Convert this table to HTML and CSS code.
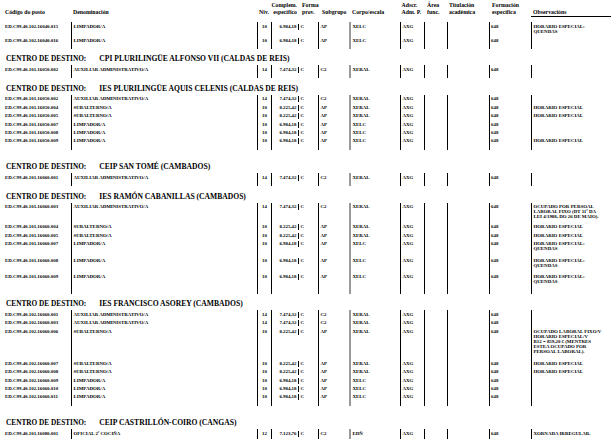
FILE: index.html
```html
<!DOCTYPE html>
<html lang="gl">
<head>
<meta charset="utf-8">
<title>Relación de postos</title>
<link rel="stylesheet" href="styles.css">
</head>
<body>
<div class="page">
  <div class="thead">
    <div class="h h-code"><br>Código do posto</div>
    <div class="h h-den"><br>Denominación</div>
    <div class="h h-niv"><br>Niv.</div>
    <div class="h h-comp">Complem.<br>específico</div>
    <div class="h h-forma">Forma<br>prov.</div>
    <div class="h h-sub"><br>Subgrupo</div>
    <div class="h h-corpo"><br>Corpo/escala</div>
    <div class="h h-ads">Adscr.<br>Adm. P.</div>
    <div class="h h-area">Área<br>func.</div>
    <div class="h h-tit">Titulación<br>académica</div>
    <div class="h h-form">Formación<br>específica</div>
    <div class="h h-obs"><br><span class="uline">Observacións</span></div>
  </div>

  <div class="block">
    <div class="row l2a">
      <div class="c c-code">ED.C99.40.102.16040.015</div><div class="c c-den">LIMPADOR/A</div><div class="c c-niv">10</div><div class="c c-comp">6.984,18</div><div class="c c-forma"><span>C</span></div><div class="c c-sub">AP</div><div class="c c-corpo">XELC</div><div class="c c-ads">AXG</div><div class="c c-area"></div><div class="c c-tit"></div><div class="c c-form">648</div><div class="c c-obs">HORARIO ESPECIAL:<br>QUENDAS</div>
    </div>
    <div class="row">
      <div class="c c-code">ED.C99.40.102.16040.016</div><div class="c c-den">LIMPADOR/A</div><div class="c c-niv">10</div><div class="c c-comp">6.984,18</div><div class="c c-forma"><span>C</span></div><div class="c c-sub">AP</div><div class="c c-corpo">XELC</div><div class="c c-ads">AXG</div><div class="c c-area"></div><div class="c c-tit"></div><div class="c c-form">648</div><div class="c c-obs"></div>
    </div>
    <div class="row tail"><div class="c c-code"></div><div class="c c-den"></div><div class="c c-niv"></div><div class="c c-comp"></div><div class="c c-forma"></div><div class="c c-sub"></div><div class="c c-corpo"></div><div class="c c-ads"></div><div class="c c-area"></div><div class="c c-tit"></div><div class="c c-form"></div><div class="c c-obs"></div></div>
  </div>

  <section class="sect">
    <h2 class="stitle"><span class="lab">CENTRO DE DESTINO:</span><span class="nm">CPI PLURILINGÜE ALFONSO VII (CALDAS DE REIS)</span></h2>
    <div class="block">
      <div class="row">
        <div class="c c-code">ED.C99.40.101.16050.002</div><div class="c c-den">AUXILIAR ADMINISTRATIVO/A</div><div class="c c-niv">14</div><div class="c c-comp">7.474,32</div><div class="c c-forma"><span>C</span></div><div class="c c-sub">C2</div><div class="c c-corpo">XERAL</div><div class="c c-ads">AXG</div><div class="c c-area"></div><div class="c c-tit"></div><div class="c c-form">648</div><div class="c c-obs"></div>
      </div>
      <div class="row tail"><div class="c c-code"></div><div class="c c-den"></div><div class="c c-niv"></div><div class="c c-comp"></div><div class="c c-forma"></div><div class="c c-sub"></div><div class="c c-corpo"></div><div class="c c-ads"></div><div class="c c-area"></div><div class="c c-tit"></div><div class="c c-form"></div><div class="c c-obs"></div></div>
    </div>
  </section>

  <section class="sect">
    <h2 class="stitle"><span class="lab">CENTRO DE DESTINO:</span><span class="nm">IES PLURILINGÜE AQUIS CELENIS (CALDAS DE REIS)</span></h2>
    <div class="block">
      <div class="row">
        <div class="c c-code">ED.C99.40.101.16050.002</div><div class="c c-den">AUXILIAR ADMINISTRATIVO/A</div><div class="c c-niv">14</div><div class="c c-comp">7.474,32</div><div class="c c-forma"><span>C</span></div><div class="c c-sub">C2</div><div class="c c-corpo">XERAL</div><div class="c c-ads">AXG</div><div class="c c-area"></div><div class="c c-tit"></div><div class="c c-form">648</div><div class="c c-obs"></div>
      </div>
      <div class="row">
        <div class="c c-code">ED.C99.40.101.16050.004</div><div class="c c-den">SUBALTERNO/A</div><div class="c c-niv">10</div><div class="c c-comp">8.225,42</div><div class="c c-forma"><span>C</span></div><div class="c c-sub">AP</div><div class="c c-corpo">XERAL</div><div class="c c-ads">AXG</div><div class="c c-area"></div><div class="c c-tit"></div><div class="c c-form">648</div><div class="c c-obs">HORARIO ESPECIAL</div>
      </div>
      <div class="row">
        <div class="c c-code">ED.C99.40.101.16050.005</div><div class="c c-den">SUBALTERNO/A</div><div class="c c-niv">10</div><div class="c c-comp">8.225,42</div><div class="c c-forma"><span>C</span></div><div class="c c-sub">AP</div><div class="c c-corpo">XERAL</div><div class="c c-ads">AXG</div><div class="c c-area"></div><div class="c c-tit"></div><div class="c c-form">648</div><div class="c c-obs">HORARIO ESPECIAL</div>
      </div>
      <div class="row">
        <div class="c c-code">ED.C99.40.101.16050.007</div><div class="c c-den">LIMPADOR/A</div><div class="c c-niv">10</div><div class="c c-comp">6.984,18</div><div class="c c-forma"><span>C</span></div><div class="c c-sub">AP</div><div class="c c-corpo">XELC</div><div class="c c-ads">AXG</div><div class="c c-area"></div><div class="c c-tit"></div><div class="c c-form">648</div><div class="c c-obs"></div>
      </div>
      <div class="row">
        <div class="c c-code">ED.C99.40.101.16050.008</div><div class="c c-den">LIMPADOR/A</div><div class="c c-niv">10</div><div class="c c-comp">6.984,18</div><div class="c c-forma"><span>C</span></div><div class="c c-sub">AP</div><div class="c c-corpo">XELC</div><div class="c c-ads">AXG</div><div class="c c-area"></div><div class="c c-tit"></div><div class="c c-form">648</div><div class="c c-obs"></div>
      </div>
      <div class="row">
        <div class="c c-code">ED.C99.40.101.16050.009</div><div class="c c-den">LIMPADOR/A</div><div class="c c-niv">10</div><div class="c c-comp">6.984,18</div><div class="c c-forma"><span>C</span></div><div class="c c-sub">AP</div><div class="c c-corpo">XELC</div><div class="c c-ads">AXG</div><div class="c c-area"></div><div class="c c-tit"></div><div class="c c-form">648</div><div class="c c-obs">HORARIO ESPECIAL</div>
      </div>
      <div class="row tail"><div class="c c-code"></div><div class="c c-den"></div><div class="c c-niv"></div><div class="c c-comp"></div><div class="c c-forma"></div><div class="c c-sub"></div><div class="c c-corpo"></div><div class="c c-ads"></div><div class="c c-area"></div><div class="c c-tit"></div><div class="c c-form"></div><div class="c c-obs"></div></div>
    </div>
  </section>

  <section class="sect far">
    <h2 class="stitle"><span class="lab">CENTRO DE DESTINO:</span><span class="nm">CEIP SAN TOMÉ (CAMBADOS)</span></h2>
    <div class="block">
      <div class="row">
        <div class="c c-code">ED.C99.40.101.16060.001</div><div class="c c-den">AUXILIAR ADMINISTRATIVO/A</div><div class="c c-niv">14</div><div class="c c-comp">7.474,32</div><div class="c c-forma"><span>C</span></div><div class="c c-sub">C2</div><div class="c c-corpo">XERAL</div><div class="c c-ads">AXG</div><div class="c c-area"></div><div class="c c-tit"></div><div class="c c-form">648</div><div class="c c-obs"></div>
      </div>
      <div class="row tail"><div class="c c-code"></div><div class="c c-den"></div><div class="c c-niv"></div><div class="c c-comp"></div><div class="c c-forma"></div><div class="c c-sub"></div><div class="c c-corpo"></div><div class="c c-ads"></div><div class="c c-area"></div><div class="c c-tit"></div><div class="c c-form"></div><div class="c c-obs"></div></div>
    </div>
  </section>

  <section class="sect">
    <h2 class="stitle"><span class="lab">CENTRO DE DESTINO:</span><span class="nm">IES RAMÓN CABANILLAS (CAMBADOS)</span></h2>
    <div class="block">
      <div class="row l3">
        <div class="c c-code">ED.C99.40.101.16060.003</div><div class="c c-den">AUXILIAR ADMINISTRATIVO/A</div><div class="c c-niv">14</div><div class="c c-comp">7.474,32</div><div class="c c-forma"><span>C</span></div><div class="c c-sub">C2</div><div class="c c-corpo">XERAL</div><div class="c c-ads">AXG</div><div class="c c-area"></div><div class="c c-tit"></div><div class="c c-form">648</div><div class="c c-obs">OCUPADO POR PERSOAL<br>LABORAL FIXO (DT 11ª DA<br>LEI 4/1988, DO 26 DE MAIO).</div>
      </div>
      <div class="row">
        <div class="c c-code">ED.C99.40.101.16060.004</div><div class="c c-den">SUBALTERNO/A</div><div class="c c-niv">10</div><div class="c c-comp">8.225,42</div><div class="c c-forma"><span>C</span></div><div class="c c-sub">AP</div><div class="c c-corpo">XERAL</div><div class="c c-ads">AXG</div><div class="c c-area"></div><div class="c c-tit"></div><div class="c c-form">648</div><div class="c c-obs">HORARIO ESPECIAL</div>
      </div>
      <div class="row">
        <div class="c c-code">ED.C99.40.101.16060.005</div><div class="c c-den">SUBALTERNO/A</div><div class="c c-niv">10</div><div class="c c-comp">8.225,42</div><div class="c c-forma"><span>C</span></div><div class="c c-sub">AP</div><div class="c c-corpo">XERAL</div><div class="c c-ads">AXG</div><div class="c c-area"></div><div class="c c-tit"></div><div class="c c-form">648</div><div class="c c-obs">HORARIO ESPECIAL</div>
      </div>
      <div class="row l2b">
        <div class="c c-code">ED.C99.40.101.16060.007</div><div class="c c-den">LIMPADOR/A</div><div class="c c-niv">10</div><div class="c c-comp">6.984,18</div><div class="c c-forma"><span>C</span></div><div class="c c-sub">AP</div><div class="c c-corpo">XELC</div><div class="c c-ads">AXG</div><div class="c c-area"></div><div class="c c-tit"></div><div class="c c-form">648</div><div class="c c-obs">HORARIO ESPECIAL:<br>QUENDAS</div>
      </div>
      <div class="row l2b">
        <div class="c c-code">ED.C99.40.101.16060.008</div><div class="c c-den">LIMPADOR/A</div><div class="c c-niv">10</div><div class="c c-comp">6.984,18</div><div class="c c-forma"><span>C</span></div><div class="c c-sub">AP</div><div class="c c-corpo">XELC</div><div class="c c-ads">AXG</div><div class="c c-area"></div><div class="c c-tit"></div><div class="c c-form">648</div><div class="c c-obs">HORARIO ESPECIAL:<br>QUENDAS</div>
      </div>
      <div class="row l2b">
        <div class="c c-code">ED.C99.40.101.16060.009</div><div class="c c-den">LIMPADOR/A</div><div class="c c-niv">10</div><div class="c c-comp">6.984,18</div><div class="c c-forma"><span>C</span></div><div class="c c-sub">AP</div><div class="c c-corpo">XELC</div><div class="c c-ads">AXG</div><div class="c c-area"></div><div class="c c-tit"></div><div class="c c-form">648</div><div class="c c-obs">HORARIO ESPECIAL:<br>QUENDAS</div>
      </div>
      <div class="row tail"><div class="c c-code"></div><div class="c c-den"></div><div class="c c-niv"></div><div class="c c-comp"></div><div class="c c-forma"></div><div class="c c-sub"></div><div class="c c-corpo"></div><div class="c c-ads"></div><div class="c c-area"></div><div class="c c-tit"></div><div class="c c-form"></div><div class="c c-obs"></div></div>
    </div>
  </section>

  <section class="sect">
    <h2 class="stitle"><span class="lab">CENTRO DE DESTINO:</span><span class="nm">IES FRANCISCO ASOREY (CAMBADOS)</span></h2>
    <div class="block">
      <div class="row">
        <div class="c c-code">ED.C99.40.102.16060.001</div><div class="c c-den">AUXILIAR ADMINISTRATIVO/A</div><div class="c c-niv">14</div><div class="c c-comp">7.474,32</div><div class="c c-forma"><span>C</span></div><div class="c c-sub">C2</div><div class="c c-corpo">XERAL</div><div class="c c-ads">AXG</div><div class="c c-area"></div><div class="c c-tit"></div><div class="c c-form">648</div><div class="c c-obs"></div>
      </div>
      <div class="row">
        <div class="c c-code">ED.C99.40.102.16060.003</div><div class="c c-den">AUXILIAR ADMINISTRATIVO/A</div><div class="c c-niv">14</div><div class="c c-comp">7.474,32</div><div class="c c-forma"><span>C</span></div><div class="c c-sub">C2</div><div class="c c-corpo">XERAL</div><div class="c c-ads">AXG</div><div class="c c-area"></div><div class="c c-tit"></div><div class="c c-form">648</div><div class="c c-obs"></div>
      </div>
      <div class="row l5">
        <div class="c c-code">ED.C99.40.102.16060.006</div><div class="c c-den">SUBALTERNO/A</div><div class="c c-niv">10</div><div class="c c-comp">8.225,42</div><div class="c c-forma"><span>C</span></div><div class="c c-sub">AP</div><div class="c c-corpo">XERAL</div><div class="c c-ads">AXG</div><div class="c c-area"></div><div class="c c-tit"></div><div class="c c-form">648</div><div class="c c-obs">OCUPADO LABORAL FIXO/V<br>HORARIO ESPECIAL/V<br>B12 = 859,20 € (MENTRES<br>ESTEA OCUPADO POR<br>PERSOAL LABORAL).</div>
      </div>
      <div class="row">
        <div class="c c-code">ED.C99.40.102.16060.007</div><div class="c c-den">SUBALTERNO/A</div><div class="c c-niv">10</div><div class="c c-comp">8.225,42</div><div class="c c-forma"><span>C</span></div><div class="c c-sub">AP</div><div class="c c-corpo">XERAL</div><div class="c c-ads">AXG</div><div class="c c-area"></div><div class="c c-tit"></div><div class="c c-form">648</div><div class="c c-obs">HORARIO ESPECIAL</div>
      </div>
      <div class="row">
        <div class="c c-code">ED.C99.40.102.16060.008</div><div class="c c-den">SUBALTERNO/A</div><div class="c c-niv">10</div><div class="c c-comp">8.225,42</div><div class="c c-forma"><span>C</span></div><div class="c c-sub">AP</div><div class="c c-corpo">XERAL</div><div class="c c-ads">AXG</div><div class="c c-area"></div><div class="c c-tit"></div><div class="c c-form">648</div><div class="c c-obs">HORARIO ESPECIAL</div>
      </div>
      <div class="row">
        <div class="c c-code">ED.C99.40.102.16060.009</div><div class="c c-den">LIMPADOR/A</div><div class="c c-niv">10</div><div class="c c-comp">6.984,18</div><div class="c c-forma"><span>C</span></div><div class="c c-sub">AP</div><div class="c c-corpo">XELC</div><div class="c c-ads">AXG</div><div class="c c-area"></div><div class="c c-tit"></div><div class="c c-form">648</div><div class="c c-obs"></div>
      </div>
      <div class="row">
        <div class="c c-code">ED.C99.40.102.16060.010</div><div class="c c-den">LIMPADOR/A</div><div class="c c-niv">10</div><div class="c c-comp">6.984,18</div><div class="c c-forma"><span>C</span></div><div class="c c-sub">AP</div><div class="c c-corpo">XELC</div><div class="c c-ads">AXG</div><div class="c c-area"></div><div class="c c-tit"></div><div class="c c-form">648</div><div class="c c-obs"></div>
      </div>
      <div class="row">
        <div class="c c-code">ED.C99.40.102.16060.011</div><div class="c c-den">LIMPADOR/A</div><div class="c c-niv">10</div><div class="c c-comp">6.984,18</div><div class="c c-forma"><span>C</span></div><div class="c c-sub">AP</div><div class="c c-corpo">XELC</div><div class="c c-ads">AXG</div><div class="c c-area"></div><div class="c c-tit"></div><div class="c c-form">648</div><div class="c c-obs"></div>
      </div>
      <div class="row tail"><div class="c c-code"></div><div class="c c-den"></div><div class="c c-niv"></div><div class="c c-comp"></div><div class="c c-forma"></div><div class="c c-sub"></div><div class="c c-corpo"></div><div class="c c-ads"></div><div class="c c-area"></div><div class="c c-tit"></div><div class="c c-form"></div><div class="c c-obs"></div></div>
    </div>
  </section>

  <section class="sect far">
    <h2 class="stitle"><span class="lab">CENTRO DE DESTINO:</span><span class="nm">CEIP CASTRILLÓN-COIRO (CANGAS)</span></h2>
    <div class="block">
      <div class="row">
        <div class="c c-code">ED.C99.40.101.16080.001</div><div class="c c-den">OFICIAL 2ª COCIÑA</div><div class="c c-niv">12</div><div class="c c-comp">7.123,76</div><div class="c c-forma"><span>C</span></div><div class="c c-sub">C2</div><div class="c c-corpo">EDÑ</div><div class="c c-ads">AXG</div><div class="c c-area"></div><div class="c c-tit"></div><div class="c c-form">648</div><div class="c c-obs">XORNADA IRREGULAR.</div>
      </div>
      <div class="row tail"><div class="c c-code"></div><div class="c c-den"></div><div class="c c-niv"></div><div class="c c-comp"></div><div class="c c-forma"></div><div class="c c-sub"></div><div class="c c-corpo"></div><div class="c c-ads"></div><div class="c c-area"></div><div class="c c-tit"></div><div class="c c-form"></div><div class="c c-obs"></div></div>
    </div>
  </section>
</div>
</body>
</html>
```

FILE: styles.css
```css
* {
  box-sizing: border-box;
  margin: 0;
  padding: 0;
}

html, body {
  background: #ffffff;
}

body {
  margin: 0;
  font-family: "Liberation Serif", "Times New Roman", serif;
  font-weight: bold;
  color: #000000;
}

.page {
  width: 616px;
  height: 439px;
  overflow: hidden;
}

/* shared column grid */
.thead,
.row {
  display: grid;
  grid-template-columns: 71px 186px 14px 27px 20px 31px 51px 24px 23px 42px 42px 85px;
}

/* ---------- table head ---------- */
.thead {
  height: 22px;
  padding-top: 1.5px;
  font-size: 5.8px;
  line-height: 7px;
  white-space: nowrap;
}

.h-code { padding-left: 5px; }
.h-den { padding-left: 2px; }
.h-niv { text-align: center; }
.h-comp { text-align: right; padding-right: 1px; }
.h-forma { padding-left: 4px; }
.h-sub { padding-left: 4px; }
.h-corpo { padding-left: 3px; }
.h-ads { padding-left: 1.5px; }
.h-area { padding-left: 3px; }
.h-tit { padding-left: 2px; }
.h-form { padding-left: 3px; }
.h-obs { padding-left: 0; }

.uline {
  display: block;
  width: 80px;
  padding-left: 2px;
  border-bottom: 1px solid #000;
  line-height: 7px;
}

/* ---------- body rows ---------- */
.row {
  height: 8.4px;
  font-size: 4.9px;
  line-height: 5px;
}

.row.l2a { height: 14px; }
.row.l2b { height: 16.5px; }
.row.l3 { height: 20px; }
.row.l5 { height: 32.2px; }
.row.tail { height: 4.6px; }

.c {
  padding-top: 1.5px;
  white-space: nowrap;
  overflow: hidden;
}

.tail .c { padding-top: 0; }

.c-code { padding-left: 5px; }
.c-den { border-left: 1px solid #000; padding-left: 1.5px; }
.c-niv { border-left: 1px solid #000; text-align: center; }
.c-comp { border-left: 1px solid #000; text-align: right; padding-right: 1.5px; }
.c-forma span {
  display: inline-block;
  border-left: 1px solid #000;
  padding-left: 1.5px;
  height: 6px;
  margin-top: -0.5px;
  line-height: 6px;
}
.c-sub { border-left: 1px solid #000; padding-left: 1.5px; }
.c-corpo { border-left: 2px solid #9a9a9a; padding-left: 1.5px; }
.c-ads { border-left: 1px solid #000; padding-left: 1.5px; }
.c-area { border-left: 1px solid #000; }
.c-tit { border-left: 1px solid #000; }
.c-form { border-left: 1px solid #000; padding-left: 1px; }
.c-obs { border-left: 1px solid #000; padding-left: 1.5px; }

/* ---------- section headings ---------- */
.sect {
  padding-top: 6.5px;
}

.sect.far {
  padding-top: 13.5px;
}

.stitle {
  height: 10px;
  padding-left: 6px;
  font-size: 7.3px;
  line-height: 8px;
  font-weight: bold;
  white-space: nowrap;
}

.stitle .lab {
  display: inline-block;
  margin-right: 13px;
}

.stitle .nm {
  font-size: 7.6px;
}
```
